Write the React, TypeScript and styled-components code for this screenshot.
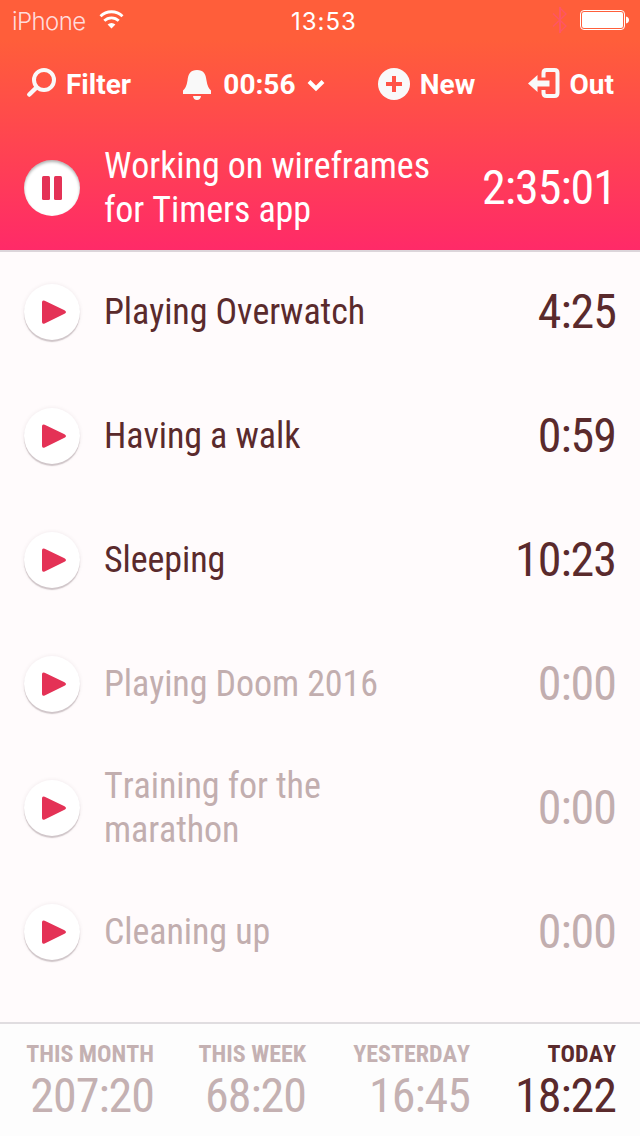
import React from "react";
import styled, { createGlobalStyle } from "styled-components";

const Global = createGlobalStyle`
  *, *::before, *::after { box-sizing: border-box; }
  body { margin: 0; background: #fffbfc; font-family: "Roboto Condensed", Roboto, sans-serif; }
`;

const Screen = styled.div`
  width: 640px;
  height: 1136px;
  display: flex;
  flex-direction: column;
  overflow: hidden;
  color: #5a2a2c;
`;

const Header = styled.header`
  flex: none;
  height: 252px;
  border-bottom: 2px solid #dcd5da;
  background: linear-gradient(#ff5e3a 40px, #ff2a68 250px) padding-box;
  color: #fff;
`;

const StatusBar = styled.div`
  height: 40px;
  padding: 0 11px 0 12px;
  display: grid;
  grid-template-columns: 1fr auto 1fr;
  align-items: center;
  font: 300 24px/36px Inter, sans-serif;
`;

const Carrier = styled.span`
  display: flex;
  align-items: center;
  gap: 14px;
  color: #ffdcdc;
`;

const CarrierName = styled.span`
  padding-top: 3px;
  letter-spacing: -0.6px;
`;

const Clock = styled.span`
  padding: 3px 0 0 7px;
  font-weight: 400;
  letter-spacing: 1px;
`;

const StatusIcons = styled.span`
  display: flex;
  justify-content: flex-end;
  align-items: center;
  gap: 12px;
`;

const Toolbar = styled.nav`
  height: 86px;
  padding: 2px 26px 0 24px;
  display: flex;
  justify-content: space-between;
  align-items: center;
`;

const ToolButton = styled.button<{ $gap?: number }>`
  display: flex;
  align-items: center;
  gap: ${(p) => p.$gap ?? 10}px;
  padding: 0;
  border: 0;
  background: none;
  color: #fff;
  font: 700 28px/36px Roboto, sans-serif;
`;

const ToolLabel = styled.span`
  padding-top: 2px;
`;

const Row = styled.div`
  height: 124px;
  padding: 0 24px;
  display: flex;
  align-items: center;
`;

const List = styled.main`
  flex: 1;
  margin-top: -2px;
`;

const RoundButton = styled.button<{ $pressed?: boolean }>`
  flex: none;
  width: 56px;
  height: 56px;
  padding: 0;
  border: 0;
  border-radius: 50%;
  background: #fff;
  display: flex;
  box-shadow: ${(p) =>
    p.$pressed
      ? "inset 0 2px 3px rgba(0,0,0,.3)"
      : "0 2px 1px rgba(60,30,40,.22), 0 0 4px rgba(60,30,40,.08)"};
`;

const Title = styled.span<{ $dim?: boolean }>`
  width: 340px;
  margin-left: 24px;
  font-size: 36px;
  line-height: 44px;
  font-stretch: 75%;
  font-kerning: none;
  letter-spacing: -0.08px;
  color: ${(p) => (p.$dim ? "#c2aeaf" : "inherit")};
`;

const Time = styled.span<{ $dim?: boolean }>`
  margin-left: auto;
  font-size: 48px;
  line-height: 56px;
  font-stretch: 75%;
  letter-spacing: -1px;
  color: ${(p) => (p.$dim ? "#c2aeaf" : "inherit")};
`;

const Footer = styled.footer`
  flex: none;
  height: 114px;
  border-top: 2px solid #e0dde0;
  background: #fdfdfd;
  padding: 16px 24px 0;
  display: grid;
  grid-template-columns: 130px 152px 164px 146px;
`;

const Total = styled.div<{ $active?: boolean }>`
  display: flex;
  flex-direction: column;
  align-items: flex-end;
  color: ${(p) => (p.$active ? "#5a2a2c" : "#c4b1b2")};
`;

const TotalLabel = styled.span`
  font-size: 24px;
  line-height: 28px;
  font-weight: 700;
  font-stretch: 75%;
  font-kerning: none;
`;

const timers = [
  { title: "Playing Overwatch", time: "4:25" },
  { title: "Having a walk", time: "0:59" },
  { title: "Sleeping", time: "10:23" },
  { title: "Playing Doom 2016", time: "0:00", dim: true },
  { title: "Training for the marathon", time: "0:00", dim: true },
  { title: "Cleaning up", time: "0:00", dim: true },
];

const totals = [
  { label: "THIS MONTH", time: "207:20" },
  { label: "THIS WEEK", time: "68:20" },
  { label: "YESTERDAY", time: "16:45" },
  { label: "TODAY", time: "18:22", active: true },
];

const WifiIcon = () => (
  <svg width="25" height="20" viewBox="0 0 25 20" fill="none" stroke="#fff" strokeWidth="2.8">
    <path d="M1.500 6.300a15.600 15.600 0 0 1 22 0M5.300 10.800a10.200 10.200 0 0 1 14.400 0" />
    <path d="M8.600 14.600a5.500 5.500 0 0 1 7.800 0l-3.900 4z" fill="#fff" stroke="none" />
  </svg>
);

const BluetoothIcon = () => (
  <svg width="16" height="28" viewBox="0 0 16 28" fill="none" stroke="#ff5566">
    <path d="M1 7.500L14 20l-6 6V2l6 6L1 20.500" strokeWidth="1.300" />
    <path d="M8 1v26" strokeWidth="2" />
  </svg>
);

const BatteryIcon = () => (
  <svg width="49" height="20" viewBox="0 0 49 20">
    <rect x=".5" y=".5" width="44" height="19" rx="3.500" fill="none" stroke="#fff" />
    <rect x="2" y="2" width="41" height="16" rx="2" fill="#fff" />
    <path d="M46 6.500q3 .8 3 3.500t-3 3.500z" fill="#fff" />
  </svg>
);

const FilterIcon = () => (
  <svg width="32" height="32" viewBox="0 0 32 32" fill="none" stroke="#f9f9f9" strokeWidth="4">
    <circle cx="20" cy="12" r="10" />
    <path d="M12.500 19.500L5.300 26.500" strokeLinecap="round" strokeWidth="4.500" />
  </svg>
);

const BellIcon = () => (
  <svg width="28" height="32" viewBox="0 0 28 32" fill="#f9f9f9">
    <path d="M0 26v-3.500q3.500-3 4.500-10C5.200 6 7.500 2 14 2s8.800 4 9.500 10.500q1 7 4.500 10V26zM10 28h8q-.5 4-4 4t-4-4z" />
  </svg>
);

const ChevronIcon = () => (
  <svg width="18" height="16" viewBox="0 0 18 16" fill="none" stroke="#fff" strokeWidth="4">
    <path d="M2 5.500l7 7 7-7" />
  </svg>
);

const PlusIcon = () => (
  <svg width="32" height="32" viewBox="0 0 32 32">
    <circle cx="16" cy="16" r="16" fill="#f9f9f9" />
    <path d="M16 8v16M8 16h16" stroke="#ff5446" strokeWidth="4" />
  </svg>
);

const OutIcon = () => (
  <svg width="32" height="32" viewBox="0 0 32 32">
    <path
      d="M15.500 9.500V5q0-3 3-3h8q3 0 3 3v20q0 3-3 3h-8q-3 0-3-3v-3"
      fill="none"
      stroke="#f9f9f9"
      strokeWidth="4"
    />
    <path d="M0 15.500L9.500 7v5.500h12v6h-12V24z" fill="#f9f9f9" />
  </svg>
);

const PauseIcon = () => (
  <svg width="56" height="56" viewBox="0 0 56 56" fill="#e43256">
    <rect x="18" y="16" width="8" height="24" rx="1.500" />
    <rect x="30" y="16" width="8" height="24" rx="1.500" />
  </svg>
);

const PlayIcon = () => (
  <svg width="56" height="56" viewBox="0 0 56 56" fill="#e43256">
    <path d="M18 18.500Q18 15.500 20.700 16.800L40.500 26.200Q43.500 28 40.500 29.800L20.700 39.500Q18 40.500 18 38z" />
  </svg>
);

export default function App() {
  return (
    <Screen>
      <Global />
      <Header>
        <StatusBar>
          <Carrier><CarrierName>iPhone</CarrierName><WifiIcon /></Carrier>
          <Clock>13:53</Clock>
          <StatusIcons><BluetoothIcon /><BatteryIcon /></StatusIcons>
        </StatusBar>
        <Toolbar>
          <ToolButton><FilterIcon /><ToolLabel>Filter</ToolLabel></ToolButton>
          <ToolButton $gap={12}><BellIcon /><ToolLabel>00:56</ToolLabel><ChevronIcon /></ToolButton>
          <ToolButton><PlusIcon /><ToolLabel>New</ToolLabel></ToolButton>
          <ToolButton><OutIcon /><ToolLabel>Out</ToolLabel></ToolButton>
        </Toolbar>
        <Row>
          <RoundButton $pressed><PauseIcon /></RoundButton>
          <Title>Working on wireframes for Timers app</Title>
          <Time>2:35:01</Time>
        </Row>
      </Header>
      <List>
        {timers.map((t) => (
          <Row key={t.title}>
            <RoundButton><PlayIcon /></RoundButton>
            <Title $dim={t.dim}>{t.title}</Title>
            <Time $dim={t.dim}>{t.time}</Time>
          </Row>
        ))}
      </List>
      <Footer>
        {totals.map((t) => (
          <Total key={t.label} $active={t.active}>
            <TotalLabel>{t.label}</TotalLabel>
            <Time>{t.time}</Time>
          </Total>
        ))}
      </Footer>
    </Screen>
  );
}
